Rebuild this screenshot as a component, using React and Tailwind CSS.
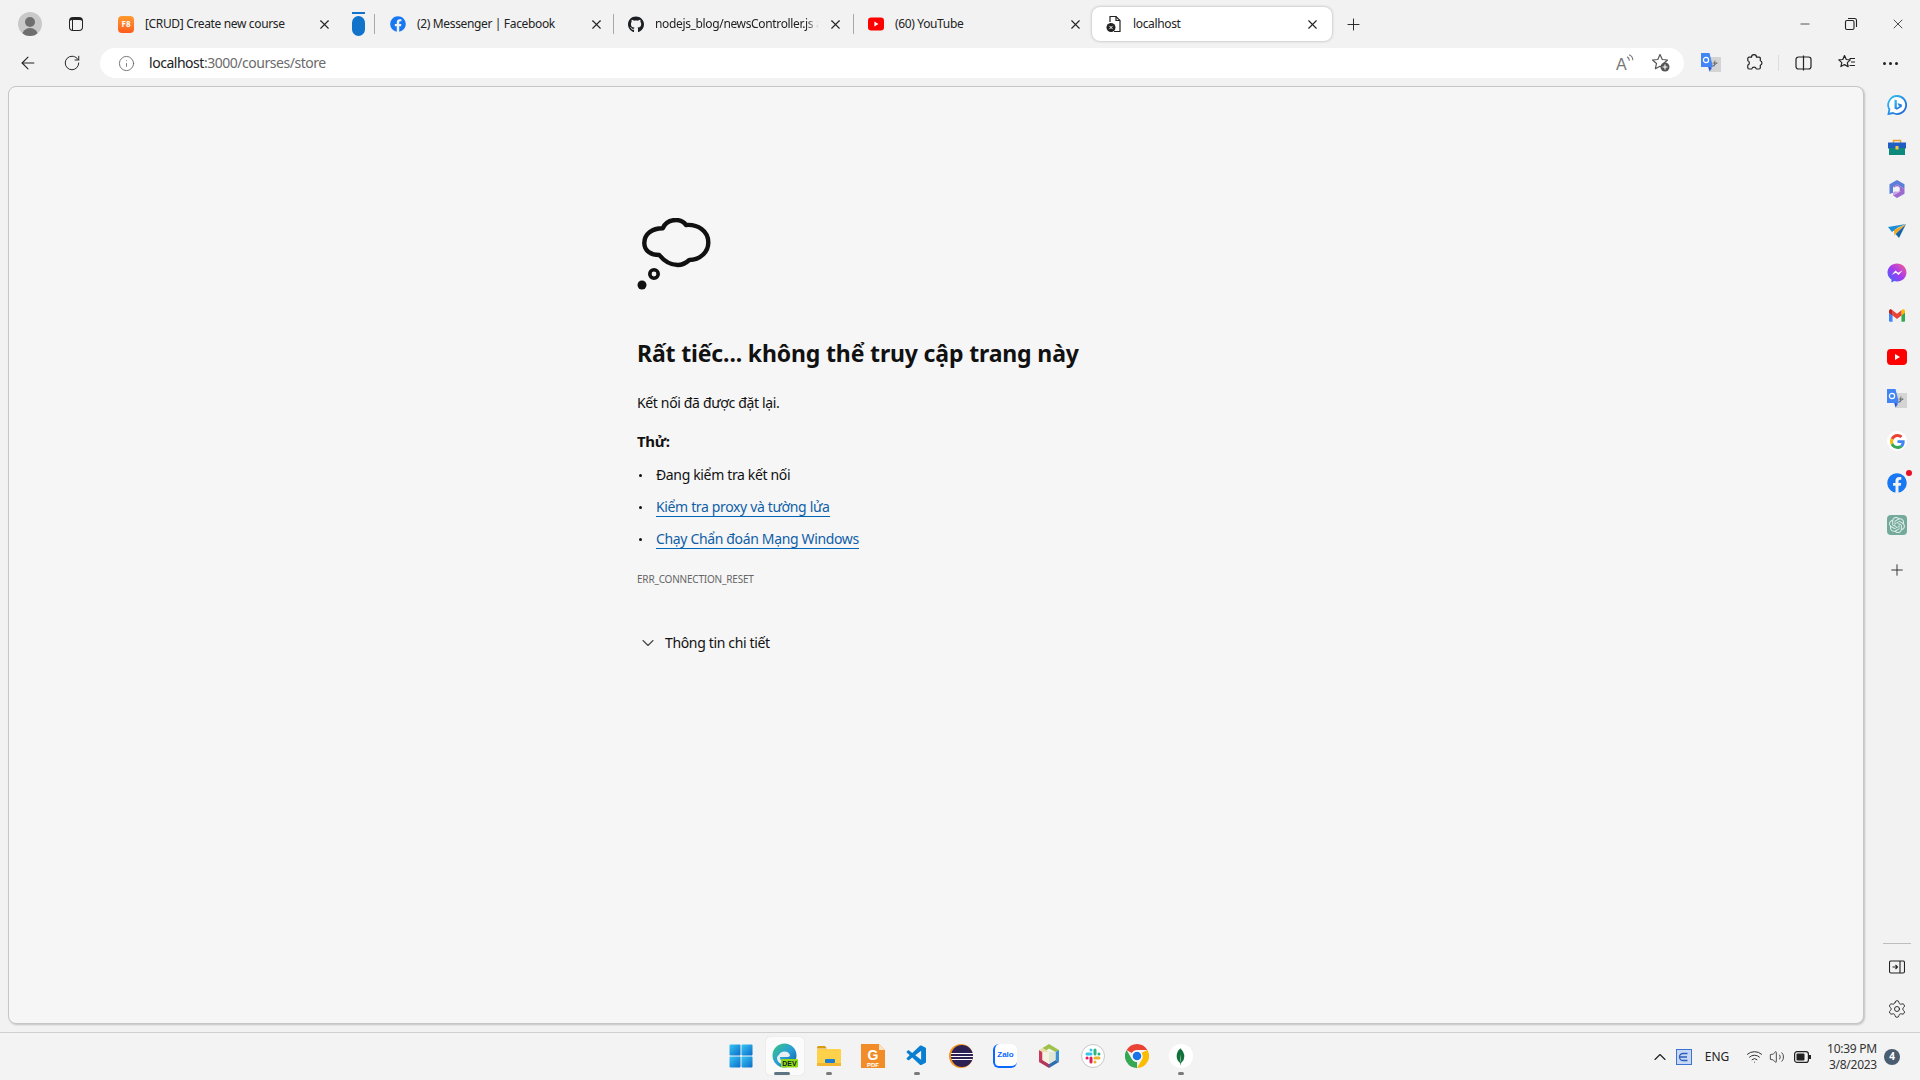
import React from "react";
import { ArrowLeft, RotateCw, Info, X, Plus, Minus, Settings, ChevronDown, ChevronUp, Wifi, Volume2 } from "lucide-react";
import { FaFacebook, FaGithub } from "react-icons/fa";
import { SiOpenai, SiMongodb } from "react-icons/si";
import { VscVscode } from "react-icons/vsc";

const FONT = "font-['Noto_Sans','Open_Sans',sans-serif]";

// --- small logos ---
const F8Logo = () => (
  <div className="w-4 h-[17px] rounded-sm bg-gradient-to-b from-[#ff9a2e] to-[#ff5a1f] flex items-center justify-center text-white text-[8px] font-bold leading-none">
    F8
  </div>
);

const YouTubeLogo = ({ size = 16 }) => (
  <svg width={size} height={size} viewBox="0 0 20 20">
    <rect x="0" y="2" width="20" height="16" rx="4" fill="#ff0000" />
    <path d="M8 7l5 3-5 3z" fill="#fff" />
  </svg>
);

const FileErrorIcon = () => (
  <svg width="16" height="18" viewBox="0 0 16 18" fill="none">
    <path d="M4 7V1.500h6l4 4v11H8" stroke="#222" strokeWidth="1.200" />
    <path d="M10 1.500v4h4" stroke="#222" strokeWidth="1.200" />
    <circle cx="5" cy="12.500" r="4.500" fill="#222" />
    <path d="M3.400 10.900l3.200 3.200M6.600 10.900l-3.200 3.200" stroke="#fff" strokeWidth="1" />
  </svg>
);

const GoogleG = ({ size = 16 }) => (
  <svg width={size} height={size} viewBox="0 0 48 48">
    <path fill="#EA4335" d="M24 9.5c3.54 0 6.71 1.22 9.21 3.6l6.85-6.85C35.9 2.38 30.47 0 24 0 14.62 0 6.51 5.38 2.56 13.22l7.98 6.19C12.43 13.72 17.74 9.5 24 9.5z" />
    <path fill="#4285F4" d="M46.98 24.55c0-1.57-.15-3.09-.38-4.55H24v9.02h12.94c-.58 2.96-2.26 5.48-4.78 7.18l7.73 6c4.51-4.18 7.09-10.36 7.09-17.65z" />
    <path fill="#FBBC05" d="M10.53 28.59c-.48-1.45-.76-2.99-.76-4.59s.27-3.14.76-4.59l-7.98-6.19C.92 16.46 0 20.12 0 24c0 3.88.92 7.54 2.56 10.78l7.97-6.19z" />
    <path fill="#34A853" d="M24 48c6.48 0 11.93-2.13 15.89-5.81l-7.73-6c-2.15 1.45-4.92 2.3-8.16 2.3-6.26 0-11.57-4.22-13.47-9.91l-7.98 6.19C6.51 42.62 14.62 48 24 48z" />
  </svg>
);

const TranslateIcon = () => (
  <svg width="20" height="20" viewBox="0 0 20 20">
    <rect x="8" y="4" width="12" height="15" fill="#d4d4d4" />
    <path d="M14 7.500l-1 6M11.500 10h5M12 13l4-3" stroke="#666" strokeWidth="0.900" fill="none" />
    <path d="M0 0h8.500l3.500 14H8l3 1.500-2.500 3-1.500-4.500H0z" fill="#4285f4" />
    <circle cx="5" cy="7" r="2.600" fill="none" stroke="#fff" strokeWidth="1.200" />
    <path d="M8 17.500l3-3-3-.5z" fill="#3b4fc4" />
  </svg>
);

const PuzzleIcon = () => (
  <svg width="18" height="18" viewBox="0 0 18 18" fill="none" stroke="#222" strokeWidth="1.200" strokeLinejoin="round">
    <path d="M6.500 3.200a2.500 2.500 0 0 1 5 0h2.800a1 1 0 0 1 1 1v2.600a2.300 2.300 0 0 1 0 4.400v2.600a1.200 1.200 0 0 1-1.200 1.200h-2.800a2.300 2.300 0 0 0-4.500 0H4a1.200 1.200 0 0 1-1.200-1.200v-2.800a2.200 2.200 0 0 0 0-4.200V4.400A1.200 1.200 0 0 1 4 3.200z" />
  </svg>
);

const BingIcon = () => (
  <svg width="20" height="20" viewBox="0 0 20 20" fill="none">
    <defs>
      <linearGradient id="bingG" x1="0" y1="0" x2="1" y2="1">
        <stop offset="0" stopColor="#35c1f1" />
        <stop offset="1" stopColor="#1b5fd9" />
      </linearGradient>
    </defs>
    <path d="M10 1a9 9 0 1 1-4 17l-4.500 1 .9-4.500A9 9 0 0 1 10 1z" stroke="url(#bingG)" strokeWidth="1.800" fill="#fff" />
    <path d="M7.500 4.500l2.300.8v7.500l3-1.700-1.400-.7-.9-2.400 4.300 1.500v2.300l-5 3-2.300-1.300z" fill="url(#bingG)" />
  </svg>
);

const ToolboxIcon = () => (
  <svg width="20" height="20" viewBox="0 0 20 20">
    <path d="M6.500 6V3.500h7V6" fill="none" stroke="#e8a33d" strokeWidth="1.500" />
    <rect x="1" y="5.500" width="18" height="6" fill="#1f5fc4" />
    <rect x="2" y="11" width="16" height="7" fill="#0e8a7d" />
    <rect x="8.500" y="9" width="3" height="3.500" fill="#f5c542" />
  </svg>
);

const M365Icon = () => (
  <svg width="20" height="20" viewBox="0 0 20 20">
    <path d="M10 1l7.500 4.200v4.500L10 5.500 6 7.700v6L2.500 15V5.200z" fill="#5a7fd8" />
    <path d="M6 7.700l4-2.200 7.500 4.200v5.100L10 19l-4-2.500 7.500-4.200z" fill="#9b6bd0" />
    <path d="M6 13.500l4-2.300 3.500 1.300L6 16.500z" fill="#c9a2e6" />
    <circle cx="10" cy="10" r="2.800" fill="#f2f2f2" />
  </svg>
);

const SendIcon = () => (
  <svg width="20" height="20" viewBox="0 0 20 20">
    <path d="M1 6l18-3-8 3.500L5 11z" fill="#1a8fd8" />
    <path d="M19 3L12 17 8.500 13z" fill="#1565a8" />
    <path d="M19 3L7 9l.5 6 1-2z" fill="#f5a623" />
  </svg>
);

const MessengerIcon = () => (
  <svg width="20" height="20" viewBox="0 0 20 20">
    <defs>
      <linearGradient id="msgG" x1="0" y1="1" x2="1" y2="0">
        <stop offset="0" stopColor="#2f6bff" />
        <stop offset="0.500" stopColor="#a33bf0" />
        <stop offset="1" stopColor="#ff5f8a" />
      </linearGradient>
    </defs>
    <path d="M10 .500c5.300 0 9.500 3.900 9.500 9S15.300 18.500 10 18.500c-1 0-1.900-.1-2.700-.4L4.500 19.500v-3A8.800 8.800 0 0 1 .500 9.500c0-5.100 4.200-9 9.500-9z" fill="url(#msgG)" />
    <path d="M4.500 12l4-4.500 2.600 2.200 4.400-2.200-4 4.500-2.600-2.200z" fill="#fff" />
  </svg>
);

const GmailIcon = () => (
  <svg width="16" height="13" viewBox="0 0 18 14">
    <path d="M0 2.500V13a1 1 0 0 0 1 1h3V6z" fill="#4285f4" />
    <path d="M18 2.500V13a1 1 0 0 1-1 1h-3V6z" fill="#34a853" />
    <path d="M14 1.200V7l4-3V2c0-1.700-2-2.500-3-1.500z" fill="#fbbc04" />
    <path d="M4 7V1.200l5 3.800 5-3.800V7L9 10.800z" fill="#ea4335" />
    <path d="M0 2v2l4 3V1.200L3 .500C2 -.5 0 .300 0 2z" fill="#c5221f" />
  </svg>
);

const ChatGptIcon = () => (
  <div className="w-5 h-5 rounded bg-[#74aa9c] flex items-center justify-center">
    <SiOpenai size={16} color="#dfece8" />
  </div>
);

const WindowsLogo = () => (
  <svg width="24" height="24" viewBox="0 0 24 24">
    <defs>
      <linearGradient id="winG" x1="0" y1="0" x2="1" y2="1">
        <stop offset="0" stopColor="#38c6f4" />
        <stop offset="1" stopColor="#0a6cc9" />
      </linearGradient>
    </defs>
    <rect x="0.500" y="0.500" width="11" height="11" rx="1" fill="url(#winG)" />
    <rect x="12.500" y="0.500" width="11" height="11" rx="1" fill="url(#winG)" />
    <rect x="0.500" y="12.500" width="11" height="11" rx="1" fill="url(#winG)" />
    <rect x="12.500" y="12.500" width="11" height="11" rx="1" fill="url(#winG)" />
  </svg>
);

const EdgeDevLogo = () => (
  <svg width="26" height="26" viewBox="0 0 26 26">
    <defs>
      <linearGradient id="edgeG" x1="0" y1="0" x2="1" y2="1">
        <stop offset="0" stopColor="#37c77d" />
        <stop offset="0.500" stopColor="#2a9fd8" />
        <stop offset="1" stopColor="#0c59a4" />
      </linearGradient>
    </defs>
    <circle cx="12.500" cy="12.500" r="12" fill="url(#edgeG)" />
    <path d="M7 12c1-4 8-5 10.500-1 1 1.800 0 3-2 3H8c0 4 4 7 8 6-5 3-11 0-11-5 0-1 .5-2.300 2-3z" fill="#f3f3f3" opacity="0.950" />
    <rect x="9" y="16" width="17" height="8.500" rx="1" fill="#8fdc10" />
    <text x="17.500" y="23" textAnchor="middle" fontSize="7" fontWeight="700" fontFamily="Liberation Sans" fill="#123">DEV</text>
  </svg>
);

const FolderLogo = () => (
  <svg width="24" height="24" viewBox="0 0 24 24">
    <path d="M0 3.500A1.500 1.500 0 0 1 1.500 2H8l2 2.500h-10z" fill="#d99a10" />
    <rect x="0" y="5" width="24" height="17" rx="1" fill="#ffd04a" />
    <rect x="8" y="15" width="10" height="4" rx="1" fill="#1c7ed0" />
    <rect x="0" y="19" width="24" height="3" fill="#f2b632" />
  </svg>
);

const FoxitLogo = () => (
  <svg width="24" height="24" viewBox="0 0 24 24">
    <path d="M0 0h18l6 6v18H0z" fill="#f28c28" />
    <path d="M18 0l6 6h-6z" fill="#fde2c4" />
    <text x="12" y="16" textAnchor="middle" fontSize="14" fontWeight="700" fontFamily="Liberation Sans" fill="#fff">G</text>
    <text x="12" y="23" textAnchor="middle" fontSize="6" fontWeight="700" fontFamily="Liberation Sans" fill="#fff">PDF</text>
  </svg>
);

const EclipseLogo = () => (
  <svg width="24" height="24" viewBox="0 0 24 24">
    <circle cx="12" cy="12" r="12" fill="#f7941e" />
    <circle cx="13" cy="12" r="11" fill="#2c2255" />
    <path d="M2 9.500h22M2 12.500h22M2.500 15.500h21" stroke="#fff" strokeWidth="1.100" />
  </svg>
);

const ZaloLogo = () => (
  <div className="relative w-6 h-6 rounded-md bg-white border-l-2 border-b-2 border-[#0a68ff] flex items-center justify-center text-[#0a68ff] text-[8px] font-bold font-['Liberation_Sans',sans-serif] leading-none">
    Zalo
  </div>
);

const NetBeansLogo = () => (
  <svg width="24" height="24" viewBox="0 0 24 24">
    <path d="M12 0l10 6-3.500 2L12 4.500 9 6.500 5.500 4z" fill="#9ec24a" />
    <path d="M22 6v12l-3.500-2V8z" fill="#3a8fd0" />
    <path d="M22 18l-10 6v-4l6.500-4z" fill="#2f6fb0" />
    <path d="M12 24L2 18v-4l3.500 2L12 20z" fill="#b5365c" />
    <path d="M2 18V6l3.500 2v8z" fill="#c8385c" />
    <path d="M2 6l3.500-2L12 8 8 10 5.500 8z" fill="#e5dfa8" />
    <path d="M12 8l6.500 0v8L12 20z" fill="#dfe8d8" />
    <path d="M12 8v12l-6.500-4V8z" fill="#f4f2e0" />
  </svg>
);

const SlackLogo = () => (
  <div className="w-6 h-6 rounded-full bg-white border border-[#c8c8c8] flex items-center justify-center">
    <svg width="16" height="16" viewBox="0 0 16 16" strokeWidth="3" strokeLinecap="round" fill="none">
      <path d="M6 2v.1M2 6h4" stroke="#36c5f0" />
      <path d="M10 2v4M14 6h-.1" stroke="#2eb67d" />
      <path d="M10 14v-.1M14 10h-4" stroke="#ecb22e" />
      <path d="M6 14v-4M2 10h.1" stroke="#e01e5a" />
    </svg>
  </div>
);

const ChromeLogo = () => (
  <svg width="24" height="24" viewBox="0 0 24 24">
    <path d="M12 0a12 12 0 0 1 10.400 6H12a6 6 0 0 0-5.200 3L1.600 6A12 12 0 0 1 12 0z" fill="#ea4335" />
    <path d="M22.400 6A12 12 0 0 1 12 24l5.200-9A6 6 0 0 0 16 9z" fill="#fbbc04" />
    <path d="M12 24A12 12 0 0 1 1.600 6l5.200 9a6 6 0 0 0 5.200 3z" fill="#34a853" />
    <circle cx="12" cy="12" r="5.500" fill="#fff" />
    <circle cx="12" cy="12" r="4.300" fill="#1a73e8" />
  </svg>
);

const MongoLogo = () => (
  <div className="w-6 h-6 rounded-full bg-white flex items-center justify-center">
    <SiMongodb size={17} color="#13713c" />
  </div>
);

// --- chrome tabs ---
const Tab = ({ icon, title, fade, width = "w-[239px]", titleWidth = "w-[164px]" }) => (
  <div className={`${width} flex items-center shrink-0`}>
    <div className="w-4 flex justify-center shrink-0">{icon}</div>
    <span className={`ml-[11px] ${titleWidth} whitespace-nowrap text-xs tracking-[-0.35px] text-[#222] ${fade ? "tracking-[-0.25px] [mask-image:linear-gradient(to_right,black_92%,transparent)]" : ""}`}>
      {title}
    </span>
    <X size={15} strokeWidth={1.8} className="ml-[9px] text-[#222] shrink-0" />
  </div>
);

const Sep = () => <div className="w-px h-5 bg-[#a8a8a8] shrink-0" />;

const TabStrip = () => (
  <div className="h-12 flex items-center pl-[18px]">
    <div className="w-6 h-6 rounded-full bg-[#c9c9c9] flex flex-col items-center justify-end overflow-hidden shrink-0">
      <div className="w-[10px] h-[10px] rounded-full bg-[#6f6f6f] mb-[1px]" />
      <div className="w-4 h-2 rounded-t-full bg-[#6f6f6f]" />
    </div>
    <div className="ml-[27px] w-[14px] h-[14px] border border-[#222] border-t-[3px] rounded-sm flex shrink-0">
      <div className="w-[3px] border-r border-[#222]" />
    </div>
    <div className="ml-[35px] flex items-center">
      <Tab icon={<F8Logo />} title="[CRUD] Create new course" width="w-[234px]" titleWidth="w-[163px]" />
      <div className="flex flex-col items-center mr-[9px] shrink-0">
        <div className="w-[13px] h-[2px] bg-[#1173c9] mb-[2px]" />
        <div className="w-[13px] h-5 rounded-full bg-[#1173c9]" />
      </div>
      <Sep />
      <div className="w-[15px] shrink-0" />
      <Tab icon={<FaFacebook size={16} color="#1877f2" />} title="(2) Messenger | Facebook" width="w-[223px]" titleWidth="w-[163px]" />
      <Sep />
      <div className="w-[14px] shrink-0" />
      <Tab icon={<FaGithub size={17} color="#1b1f23" />} title="nodejs_blog/newsController.js a" fade width="w-[225px]" />
      <Sep />
      <div className="w-[14px] shrink-0" />
      <Tab icon={<YouTubeLogo />} title="(60) YouTube" width="w-[224px]" />
      <div className="w-[240px] h-[34px] bg-white rounded-lg shadow-[0_0_3px_rgba(0,0,0,0.3)] flex items-center pl-[14px] shrink-0">
        <FileErrorIcon />
        <span className="ml-[11px] w-[165px] text-xs tracking-[-0.35px] text-[#222]">localhost</span>
        <X size={15} strokeWidth={1.8} className="ml-[7px] text-[#222]" />
      </div>
      <Plus size={19} strokeWidth={1.2} className="ml-3 text-[#222] shrink-0" />
    </div>
    <div className="ml-auto flex items-center pr-[14px] gap-[32px] text-[#222]">
      <Minus size={14} strokeWidth={1.3} />
      <svg width="14" height="14" viewBox="0 0 14 14" fill="none" stroke="#222" strokeWidth="1.100">
        <rect x="1.500" y="3.500" width="8.500" height="9" rx="1.500" />
        <path d="M4 1.500h6.500a2 2 0 0 1 2 2V10" />
      </svg>
      <X size={16} strokeWidth={1.2} />
    </div>
  </div>
);

// --- toolbar ---
const ReadAloudIcon = () => (
  <svg width="20" height="20" viewBox="0 0 20 20" fill="none" stroke="#777" strokeWidth="1.100">
    <text x="1" y="17" fontSize="16" fontFamily="Liberation Sans" fill="#777" stroke="none">A</text>
    <path d="M12 4c1.500.5 2.300 2 2.300 3.800M14 1.800c2.200.8 3.800 3 3.800 5.500" />
  </svg>
);

const FavAddIcon = () => (
  <svg width="20" height="20" viewBox="0 0 20 20" fill="none">
    <path d="M9 1.500l2.300 5 5.200.5-3.900 3.500 1.100 5.200L9 13.200l-4.600 2.500 1.100-5.200L1.500 7l5.300-.5z" stroke="#555" strokeWidth="1.200" strokeLinejoin="round" />
    <circle cx="14" cy="14" r="4.500" fill="#555" />
    <path d="M14 11.500v5M11.500 14h5" stroke="#fff" strokeWidth="1.100" />
  </svg>
);

const SplitIcon = () => (
  <svg width="18" height="16" viewBox="0 0 18 16" fill="none" stroke="#222" strokeWidth="1.200">
    <rect x="1" y="2" width="15" height="12" rx="2.500" />
    <path d="M8.500 .500v15" />
  </svg>
);

const FavListIcon = () => (
  <svg width="18" height="18" viewBox="0 0 18 18" fill="none" stroke="#222" strokeWidth="1.200" strokeLinejoin="round">
    <path d="M6.500 1.500l1.800 4 4 .4-3 2.700.9 4-3.700-2-3.600 2 .9-4-3-2.700 4-.4z" />
    <path d="M11.500 4.500H17M13 8h4M11.500 11.500H17" />
  </svg>
);

const Toolbar = () => (
  <div className="h-[30px] flex items-center pl-[18px]">
    <ArrowLeft size={20} strokeWidth={1.3} className="text-[#222] shrink-0" />
    <RotateCw size={18} strokeWidth={1.3} className="ml-[25px] text-[#222] shrink-0" />
    <div className="ml-[19px] w-[1584px] h-[30px] bg-white rounded-full flex items-center pl-[18px] pr-[13px] shrink-0">
      <Info size={17} strokeWidth={1.1} className="text-[#555] shrink-0" />
      <span className="ml-[14px] text-sm leading-none tracking-[-0.47px] text-[#222]">
        localhost<span className="text-[#6b6b6b]">:3000/courses/store</span>
      </span>
      <div className="ml-auto flex items-center gap-[16px]">
        <ReadAloudIcon />
        <FavAddIcon />
      </div>
    </div>
    <div className="ml-[17px] shrink-0"><TranslateIcon /></div>
    <div className="ml-[24px] shrink-0"><PuzzleIcon /></div>
    <div className="ml-[15px] w-px h-4 bg-[#dcdcdc] shrink-0" />
    <div className="ml-4 shrink-0"><SplitIcon /></div>
    <div className="ml-[25px] shrink-0"><FavListIcon /></div>
    <div className="ml-[27px] flex gap-[3px] shrink-0">
      <div className="w-[3px] h-[3px] rounded-full bg-[#222]" />
      <div className="w-[3px] h-[3px] rounded-full bg-[#222]" />
      <div className="w-[3px] h-[3px] rounded-full bg-[#222]" />
    </div>
  </div>
);

// --- error page ---
const ThoughtCloud = () => (
  <svg width="74" height="74" viewBox="0 0 74 74" fill="none">
    <path
      d="M25.700 10.300C28 5 33 2 39 2c4 0 8 2 10 5 12-1 22 6 22.300 17 .2 10-8.300 18-19 18-3.300 3-7.300 5-11.600 5-7.700 0-13.700-4-18.400-10C14 37 7.300 33 7.300 25c0-9 7.700-14.700 18.400-14.700z"
      stroke="#111"
      strokeWidth="4.400"
      strokeLinejoin="round"
    />
    <circle cx="17" cy="56" r="4.200" stroke="#111" strokeWidth="3.600" />
    <circle cx="5" cy="67" r="4.500" fill="#111" />
  </svg>
);

const Bullet = ({ children }) => (
  <li className="flex items-center h-8">
    <div className="w-[3px] h-[3px] rounded-full bg-[#111] ml-[2px] mr-[14px] shrink-0" />
    {children}
  </li>
);

const ErrLink = ({ children }) => (
  <a className="text-[#0f5ea8] border-b border-[#0067b8] leading-[18px]">{children}</a>
);

const ErrorPanel = () => (
  <div className="flex-1 bg-[#f6f6f6] border border-[#c6c6c6] rounded-lg shadow-[1px_1px_2px_rgba(0,0,0,0.2)] pl-[628px] pt-[131px] text-sm tracking-[-0.35px] text-[#111]">
    <ThoughtCloud />
    <h1 className="mt-[45px] text-[23px] tracking-[-0.15px] font-bold leading-8">Rất tiếc... không thể truy cập trang này</h1>
    <p className="mt-[24px] leading-5">Kết nối đã được đặt lại.</p>
    <p className="mt-[18px] font-bold text-[15px] leading-5">Thử:</p>
    <ul className="mt-[8px]">
      <Bullet>Đang kiểm tra kết nối</Bullet>
      <Bullet><ErrLink>Kiểm tra proxy và tường lửa</ErrLink></Bullet>
      <Bullet><ErrLink>Chạy Chẩn đoán Mạng Windows</ErrLink></Bullet>
    </ul>
    <p className="mt-[16px] text-[10px] tracking-[-0.2px] leading-4 text-[#666]">ERR_CONNECTION_RESET</p>
    <div className="mt-[46px] flex items-center h-5">
      <ChevronDown size={20} strokeWidth={1.3} className="ml-[1px] text-[#444]" />
      <span className="ml-[7px]">Thông tin chi tiết</span>
    </div>
  </div>
);

// --- right sidebar ---
const SIDEBAR_ICONS = [
  <BingIcon />,
  <ToolboxIcon />,
  <M365Icon />,
  <SendIcon />,
  <MessengerIcon />,
  <GmailIcon />,
  <YouTubeLogo size={20} />,
  <TranslateIcon />,
  <div className="w-5 h-5 rounded-full bg-white flex items-center justify-center"><GoogleG size={15} /></div>,
  <div className="relative">
    <FaFacebook size={20} color="#1877f2" />
    <div className="absolute -top-[3px] -right-[5px] w-[6px] h-[6px] rounded-full bg-[#e81123]" />
  </div>,
  <ChatGptIcon />,
];

const Sidebar = () => (
  <div className="w-14 shrink-0 flex flex-col items-center pl-[10px] pt-[9px] pb-[5px]">
    <div className="flex flex-col items-center gap-[22px]">
      {SIDEBAR_ICONS.map((icon, i) => (
        <div key={i} className="w-5 h-5 flex items-center justify-center">{icon}</div>
      ))}
      <Plus size={18} strokeWidth={1.2} className="text-[#222] mt-[4px]" />
    </div>
    <div className="mt-auto w-7 h-px bg-[#bdbdbd] shrink-0" />
    <svg className="mt-4 shrink-0" width="16" height="14" viewBox="0 0 16 14" fill="none" stroke="#222" strokeWidth="1.100">
      <rect x="0.500" y="1" width="15" height="12" rx="1.500" />
      <path d="M11 1v12M3.500 7h5M6.500 5l2 2-2 2" />
    </svg>
    <Settings size={20} strokeWidth={1.1} className="mt-[25px] text-[#222] shrink-0" />
  </div>
);

// --- taskbar ---
const TASK_APPS = [
  { icon: <WindowsLogo /> },
  { icon: <EdgeDevLogo />, active: true },
  { icon: <FolderLogo />, dot: true },
  { icon: <FoxitLogo /> },
  { icon: <VscVscode size={24} color="#0a7ed1" />, dot: true },
  { icon: <EclipseLogo /> },
  { icon: <ZaloLogo /> },
  { icon: <NetBeansLogo /> },
  { icon: <SlackLogo /> },
  { icon: <ChromeLogo /> },
  { icon: <MongoLogo />, dot: true },
];

const TaskApp = ({ icon, active, dot }) => (
  <div className="relative w-11 h-[47px] pb-[1px] flex items-center justify-center">
    {active && <div className="absolute left-[3px] top-[4px] w-[38px] h-[38px] rounded bg-[#fbfbfb] shadow-[0_0_1px_rgba(0,0,0,0.2)]" />}
    <div className="relative">{icon}</div>
    {active && <div className="absolute left-[11px] bottom-[5px] w-[16px] h-[3px] rounded-full bg-[#5f7482]" />}
    {dot && <div className="absolute left-[19px] bottom-[5px] w-[6px] h-[3px] rounded-full bg-[#7a7a7a]" />}
  </div>
);

const Tray = () => (
  <div className="flex items-center justify-end pr-5 text-[#222]">
    <ChevronUp size={20} strokeWidth={1.4} />
    <svg className="ml-[6px]" width="16" height="16" viewBox="0 0 16 16">
      <rect x="0.500" y="0.500" width="15" height="15" fill="#c7d7f5" stroke="#3b73d1" />
      <path d="M11.500 4.500H7a3.500 3.500 0 0 0 0 7h4.500M4 8h7" fill="none" stroke="#2c5fb8" strokeWidth="1.300" />
    </svg>
    <span className="ml-[13px] text-xs tracking-[-0.1px]">ENG</span>
    <Wifi size={17} strokeWidth={1.3} className="ml-[17px]" />
    <Volume2 size={16} strokeWidth={1.2} className="ml-[6px]" />
    <svg className="ml-[9px]" width="17" height="12" viewBox="0 0 17 12">
      <rect x="0.600" y="0.600" width="13.800" height="10.800" rx="2.500" fill="none" stroke="#222" strokeWidth="1.200" />
      <rect x="2.500" y="2.500" width="8" height="7" rx="1" fill="#222" />
      <rect x="15" y="4" width="2" height="4" fill="#222" />
    </svg>
    <div className="ml-[16px] flex flex-col items-end text-xs tracking-[-0.25px] leading-4 text-[#333]">
      <span>10:39 PM</span>
      <span>3/8/2023</span>
    </div>
    <div className="ml-[7px] w-4 h-4 rounded-full bg-[#4a5d70] text-white text-[10px] font-bold flex items-center justify-center">4</div>
  </div>
);

const Taskbar = () => (
  <div className="h-12 bg-[#f3f3f3] border-t border-[#cfcfcf] grid grid-cols-[1fr_auto_1fr] items-center">
    <div />
    <div className="flex pl-[1px]">
      {TASK_APPS.map((app, i) => <TaskApp key={i} {...app} />)}
    </div>
    <Tray />
  </div>
);

export default function App() {
  return (
    <div className={`w-[1920px] h-[1080px] overflow-hidden bg-[#f2f2f2] flex flex-col ${FONT}`}>
      <TabStrip />
      <Toolbar />
      <div className="flex-1 min-h-0 flex pt-2 pl-2 pb-2">
        <ErrorPanel />
        <Sidebar />
      </div>
      <Taskbar />
    </div>
  );
}
